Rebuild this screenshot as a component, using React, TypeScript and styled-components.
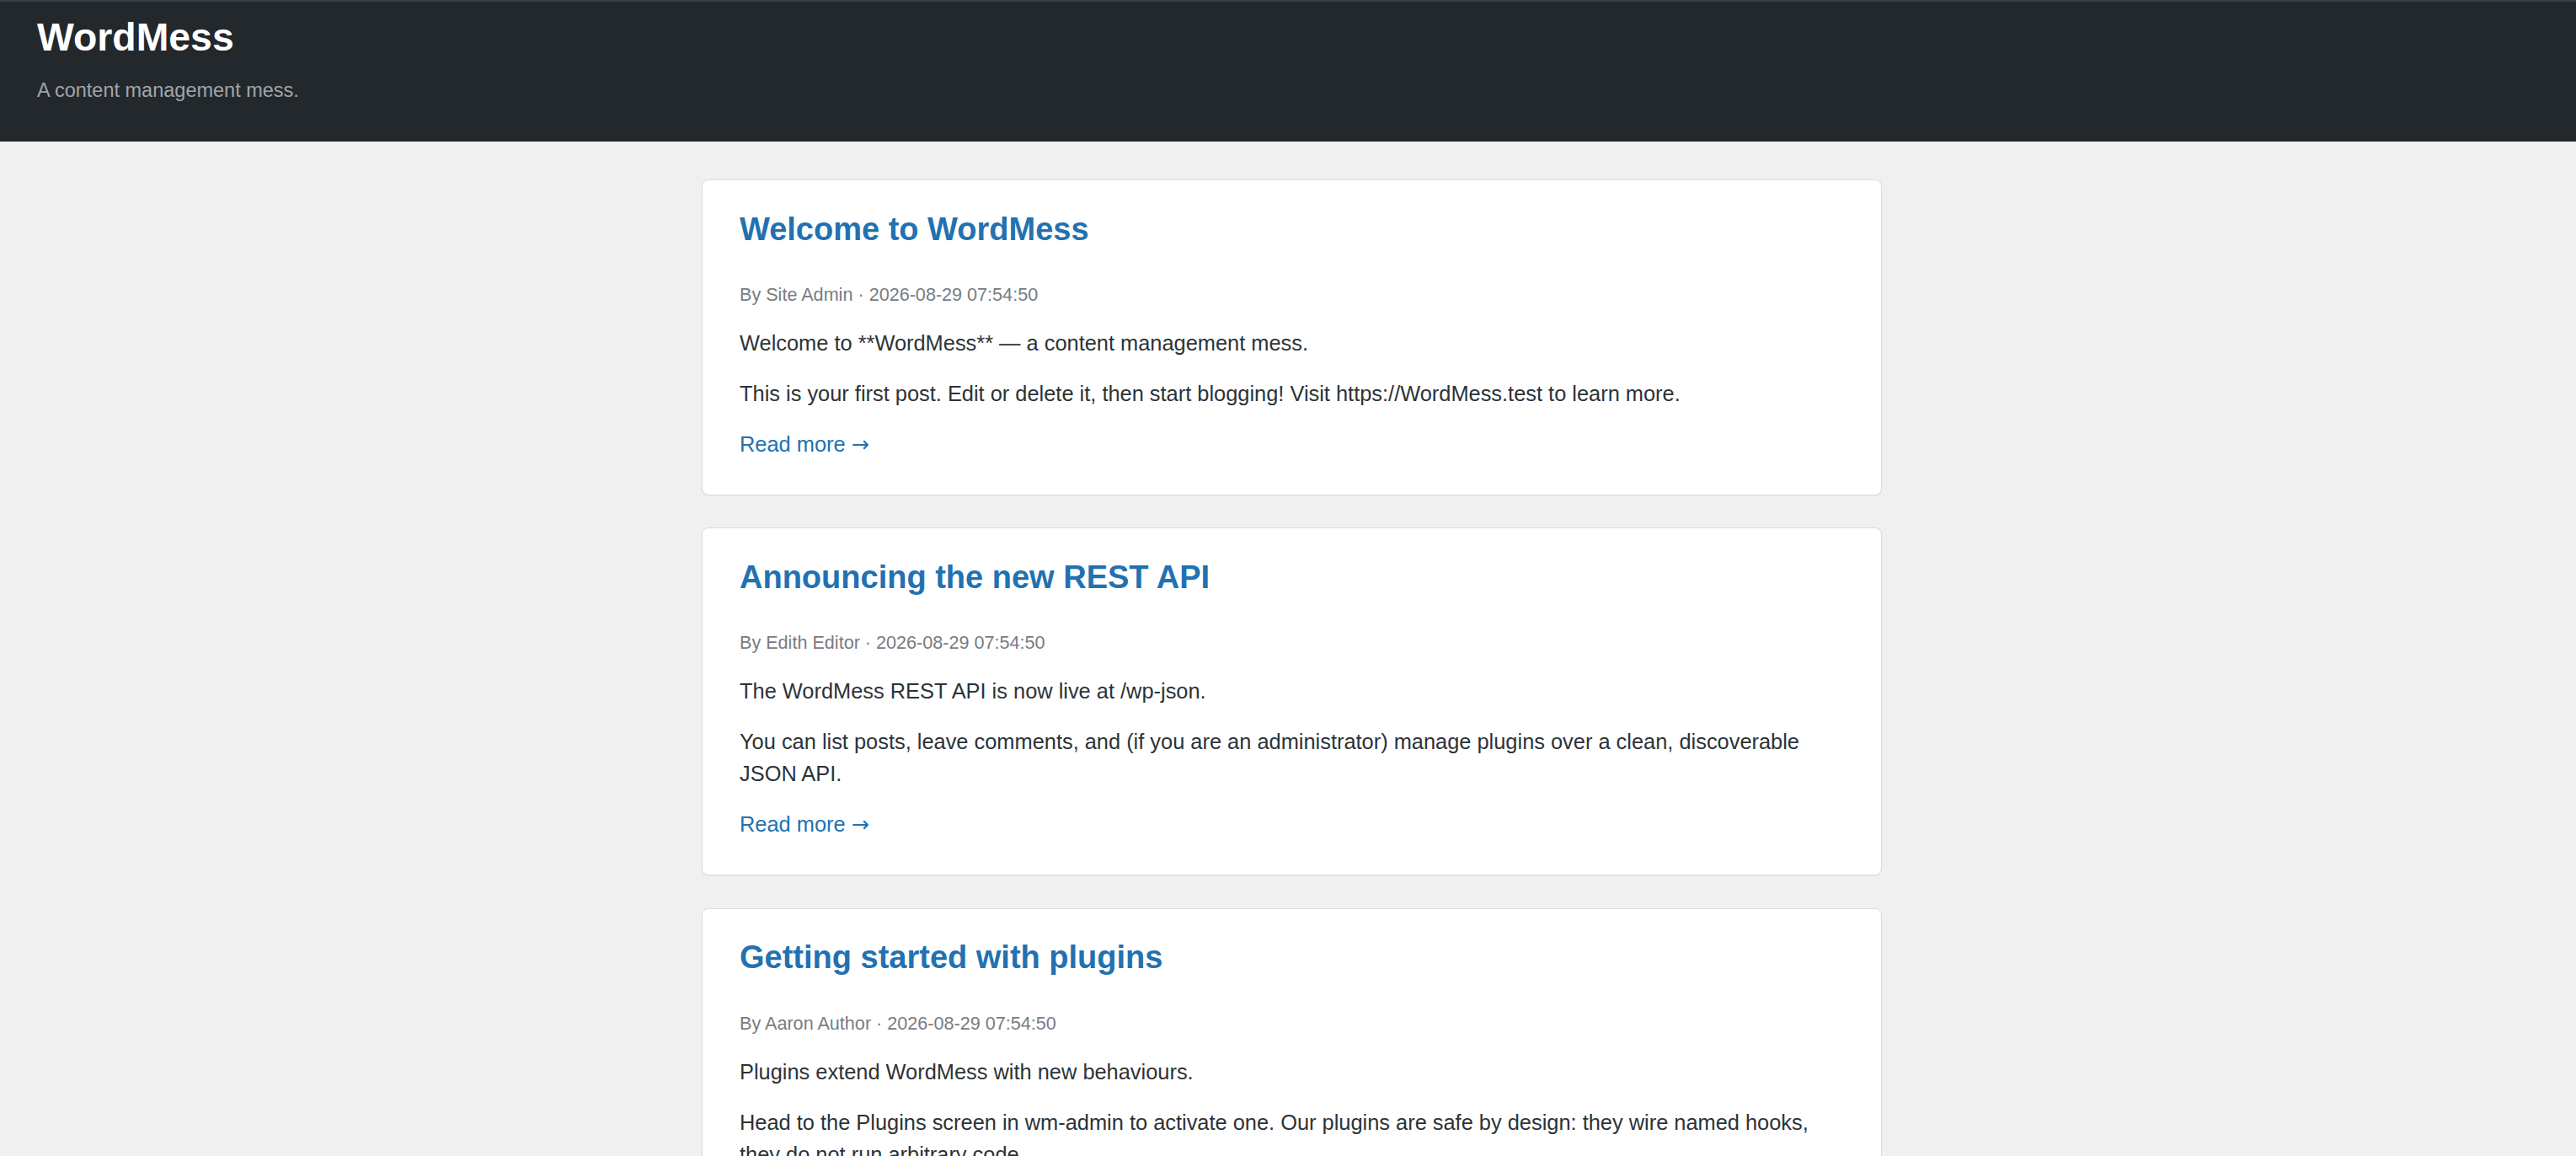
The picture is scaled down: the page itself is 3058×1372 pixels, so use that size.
import styled, { createGlobalStyle } from "styled-components";

const GlobalStyle = createGlobalStyle`
  * {
    box-sizing: border-box;
  }
  html,
  body {
    margin: 0;
    padding: 0;
    background: #f0f0f0;
    font-family: "Liberation Sans", Arial, sans-serif;
    color: #2c3338;
  }
`;

type Post = {
  title: string;
  author: string;
  date: string;
  paragraphs: string[];
};

const posts: Post[] = [
  {
    title: "Welcome to WordMess",
    author: "Site Admin",
    date: "2026-08-29 07:54:50",
    paragraphs: [
      "Welcome to **WordMess** — a content management mess.",
      "This is your first post. Edit or delete it, then start blogging! Visit https://WordMess.test to learn more.",
    ],
  },
  {
    title: "Announcing the new REST API",
    author: "Edith Editor",
    date: "2026-08-29 07:54:50",
    paragraphs: [
      "The WordMess REST API is now live at /wp-json.",
      "You can list posts, leave comments, and (if you are an administrator) manage plugins over a clean, discoverable JSON API.",
    ],
  },
  {
    title: "Getting started with plugins",
    author: "Aaron Author",
    date: "2026-08-29 07:54:50",
    paragraphs: [
      "Plugins extend WordMess with new behaviours.",
      "Head to the Plugins screen in wm-admin to activate one. Our plugins are safe by design: they wire named hooks, they do not run arbitrary code.",
    ],
  },
];

const SiteHeader = styled.header`
  background: #23282d;
  border-top: 2px solid #3a3f44;
  padding: 15px 44px 0;
  height: 168px;
`;

const SiteTitle = styled.h1`
  margin: 0;
  font-size: 46.4px;
  line-height: 1.2;
  font-weight: 700;
  color: #ffffff;
`;

const Tagline = styled.p`
  margin: 17px 0 0;
  font-size: 23.5px;
  line-height: 1.5;
  color: #a0a5aa;
`;

const Feed = styled.main`
  display: flex;
  flex-direction: column;
  align-items: center;
  gap: 38.4px;
  padding: 45px 0 60px 9px;
`;

const Card = styled.article`
  width: 1401px;
  background: #ffffff;
  border: 1px solid #dcdcde;
  border-radius: 8px;
  box-shadow: 0 1px 2px rgba(0, 0, 0, 0.04);
  padding: 34.6px 44px 40.6px;
`;

const PostTitle = styled.h2`
  margin: 0 0 39.6px;
  font-size: 38px;
  line-height: 46px;
  font-weight: 700;

  a {
    color: #2271b1;
    text-decoration: none;
  }
`;

const Meta = styled.div`
  margin-bottom: 21.2px;
  font-size: 21.6px;
  line-height: 32.4px;
  color: #787c82;
`;

const Body = styled.p`
  margin: 0 0 21.6px;
  font-size: 25.4px;
  line-height: 38.4px;
  color: #2c3338;
`;

const ReadMore = styled.a`
  display: block;
  font-size: 25.4px;
  line-height: 38.4px;
  color: #2271b1;
  text-decoration: none;
`;

// the arrow glyph comes from DejaVu, which draws it wider than Liberation
const Arrow = styled.span`
  font-family: "DejaVu Sans", sans-serif;
`;

function PostCard({ post }: { post: Post }) {
  return (
    <Card>
      <PostTitle>
        <a href="#">{post.title}</a>
      </PostTitle>
      <Meta>
        By {post.author} · {post.date}
      </Meta>
      {post.paragraphs.map((text, i) => (
        <Body key={i}>{text}</Body>
      ))}
      <ReadMore href="#">
        Read more <Arrow>→</Arrow>
      </ReadMore>
    </Card>
  );
}

export default function App() {
  return (
    <>
      <GlobalStyle />
      <SiteHeader>
        <SiteTitle>WordMess</SiteTitle>
        <Tagline>A content management mess.</Tagline>
      </SiteHeader>
      <Feed>
        {posts.map((post) => (
          <PostCard key={post.title} post={post} />
        ))}
      </Feed>
    </>
  );
}
